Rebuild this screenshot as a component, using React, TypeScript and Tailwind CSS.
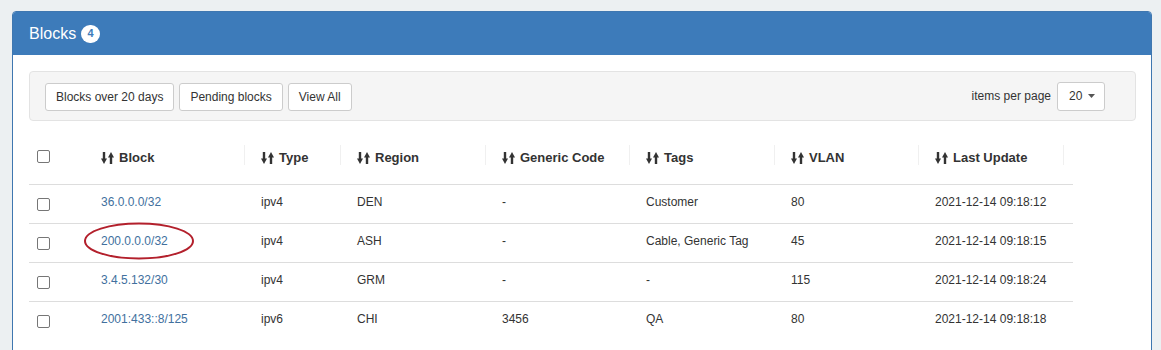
import React from "react";

const cols = "grid-cols-[56px_160px_96px_145px_144px_145px_144px_145px_9px]";

const headers = ["Block", "Type", "Region", "Generic Code", "Tags", "VLAN", "Last Update"];

const rows = [
  ["36.0.0.0/32", "ipv4", "DEN", "-", "Customer", "80", "2021-12-14 09:18:12"],
  ["200.0.0.0/32", "ipv4", "ASH", "-", "Cable, Generic Tag", "45", "2021-12-14 09:18:15"],
  ["3.4.5.132/30", "ipv4", "GRM", "-", "-", "115", "2021-12-14 09:18:24"],
  ["2001:433::8/125", "ipv6", "CHI", "3456", "QA", "80", "2021-12-14 09:18:18"],
];

function SortIcon() {
  return (
    <svg width="13" height="12" viewBox="0 0 13 12" className="shrink-0">
      <path d="M3 0v8" stroke="#333" strokeWidth="2.4" />
      <path d="M0 6.5h6L3 12z" fill="#333" />
      <path d="M10 12V4" stroke="#333" strokeWidth="2.4" />
      <path d="M7 5.5h6L10 0z" fill="#333" />
    </svg>
  );
}

function Check() {
  return <span className="block w-[13px] h-[13px] border border-[#767676] rounded-[2px] bg-white" />;
}

export default function App() {
  return (
    <div className="min-h-[350px] bg-[#ecf0f2] pt-[11px] pl-[12px] pr-[9px] font-['Liberation_Sans',Arial,sans-serif] text-[#333]">
      <div className="bg-white border border-[#3f77b0] rounded-[4px] overflow-hidden">
        <div className="h-[43px] bg-[#3d7bba] flex items-center pl-[16px] gap-[5px]">
          <span className="text-white text-[16px]">Blocks</span>
          <span className="w-[19px] h-[18px] rounded-full bg-white text-[#3d7bba] text-[11px] font-bold flex items-center justify-center">
            4
          </span>
        </div>

        <div className="p-4 pr-[15px]">
          <div className="bg-[#f5f5f5] border border-[#e3e3e3] rounded-[4px] pl-[15px] pr-[30px] pt-[11px] pb-[9px] flex items-center justify-between">
            <div className="flex gap-[5px]">
              {["Blocks over 20 days", "Pending blocks", "View All"].map((b) => (
                <button
                  key={b}
                  className="h-[28px] px-[10px] bg-white border border-[#ccc] rounded-[3px] text-[12px] text-[#333]"
                >
                  {b}
                </button>
              ))}
            </div>
            <div className="flex items-center gap-[6px] -mt-[2px]">
              <span className="text-[12px]">items per page</span>
              <div className="w-[48px] h-[29px] border border-[#ccc] rounded-[3px] bg-white flex items-center justify-between pl-[11px] pr-[9px]">
                <span className="text-[12px]">20</span>
                <svg width="7" height="4" viewBox="0 0 7 4">
                  <path d="M0 0h7L3.5 4z" fill="#555" />
                </svg>
              </div>
            </div>
          </div>

          <div className="mt-[11px] w-[1044px] text-[12px]">
            <div className={`grid ${cols} h-[53px] border-b border-[#ddd]`}>
              <div className="flex items-center pl-[8px] -mt-[3px]">
                <Check />
              </div>
              {headers.map((h) => (
                <div key={h} className="flex items-center pl-[16px]">
                  <div className="flex-1 flex items-center gap-[5px] font-bold text-[13px] text-[#333]">
                    <SortIcon />
                    <span>{h}</span>
                  </div>
                  <span className="w-px h-[20px] bg-[#f0f0f0] -mt-[6px]" />
                </div>
              ))}
              <div />
            </div>
            {rows.map((r, i) => (
              <div
                key={r[0]}
                className={`grid ${cols} h-[39px] ${i < rows.length - 1 ? "border-b border-[#ddd]" : ""}`}
              >
                <div className="flex items-center pl-[8px]">
                  <Check />
                </div>
                {r.map((c, j) => (
                  <div key={j} className="relative flex items-center pl-[16px] pb-[5px]">
                    {j === 0 ? <a className="text-[#41709e]">{c}</a> : <span>{c}</span>}
                    {j === 0 && i === 1 && (
                      <svg
                        className="absolute left-[-2px] top-[-2px]"
                        width="112"
                        height="38"
                        viewBox="0 0 112 38"
                      >
                        <ellipse cx="56" cy="19" rx="54" ry="17.5" fill="none" stroke="#b3202c" strokeWidth="2" />
                      </svg>
                    )}
                  </div>
                ))}
                <div />
              </div>
            ))}
          </div>
        </div>
      </div>
    </div>
  );
}
